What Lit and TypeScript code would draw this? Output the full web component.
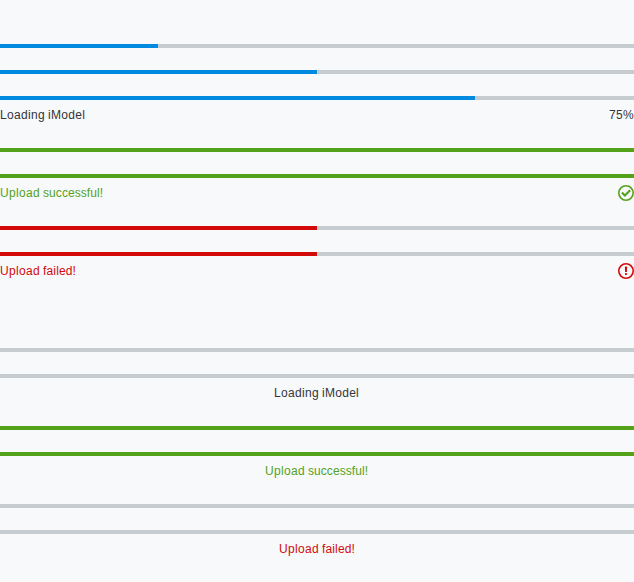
import { LitElement, html, css, svg } from "lit";
import { customElement, property } from "lit/decorators.js";

const tracking: Record<string, string> = {
  "successful!": "tight",
  "failed!": "snug",
  iModel: "medium",
};

@customElement("progress-linear")
class ProgressLinear extends LitElement {
  @property({ type: Number }) value = 0;
  @property() status = "";
  @property() label = "";
  @property() end = "";

  static styles = css`
    :host { display: block; color: #333537; --fill: #008be1; }
    :host([status="positive"]) { --fill: #53a21a; color: #53a21a; }
    :host([status="negative"]) { --fill: #d30a0a; color: #d30a0a; }
    .track { height: 4px; background: #c7ccd1; }
    .fill { height: 4px; background: var(--fill); }
    .row { display: flex; justify-content: space-between; align-items: center; height: 22px; margin-top: 4px; }
    .label { word-spacing: -0.33px; white-space: nowrap; }
    .word { letter-spacing: 0.333px; }
    .medium { letter-spacing: 0.278px; }
    .snug { letter-spacing: 0.14px; }
    .tight { letter-spacing: 0.06px; }
    :host([centered]) .row { justify-content: center; }
    :host([centered]) .label { padding-right: 1px; }
    :host([centered][status="negative"]) .label { padding-right: 0; }
    svg { display: block; width: 16px; height: 16px; fill: currentColor; }
  `;

  icon() {
    return html`<svg viewBox="0 0 16 16">
      <path d="M8 1.6A6.4 6.4 0 1 1 1.6 8 6.4 6.4 0 0 1 8 1.6M8 0a8 8 0 1 0 8 8 8 8 0 0 0-8-8z"/>
      ${this.status === "positive"
        ? svg`<path d="M11.4 4.4 6.9 8.9 4.7 6.7 3.2 8.2l3.7 3.7 6-6z"/>`
        : svg`<path d="M6.9 4.2Q6.9 3.6 7.5 3.6h1q.6 0 .6.6L8.9 9H7.1z"/><circle cx="8" cy="11.1" r="1.15"/>`}
    </svg>`;
  }

  text(value: string) {
    return html`<span class="label">${value.split(" ").map(
      (word, i) => html`${i ? " " : ""}<span class="word ${tracking[word] ?? ""}">${word}</span>`
    )}</span>`;
  }

  render() {
    return html`
      <div class="track"><div class="fill" style="width:${Math.max(0, this.value - (this.value < 100 ? 0.03 : 0))}%"></div></div>
      ${this.label ? html`<div class="row">
        ${this.text(this.label)}
        ${this.end === "icon" ? this.icon() : this.end ? this.text(this.end) : ""}
      </div>` : ""}`;
  }
}

@customElement("app-root")
class AppRoot extends LitElement {
  static styles = css`
    :host {
      display: block; box-sizing: border-box; height: 582px; padding-top: 44px;
      background: #f8f9fb; font: 12px/22px "Liberation Sans", Arial, sans-serif;
    }
    .group { display: grid; }
    .group + .group { margin-top: 66px; }
    progress-linear { margin-bottom: 22px; }
    .group > :last-child { margin-bottom: 0; }
  `;

  render() {
    return html`
      <div class="group">
        <progress-linear value="25"></progress-linear>
        <progress-linear value="50"></progress-linear>
        <progress-linear value="75" label="Loading iModel" end="75%"></progress-linear>
        <progress-linear value="100" status="positive"></progress-linear>
        <progress-linear value="100" status="positive" label="Upload successful!" end="icon"></progress-linear>
        <progress-linear value="50" status="negative"></progress-linear>
        <progress-linear value="50" status="negative" label="Upload failed!" end="icon"></progress-linear>
      </div>
      <div class="group">
        <progress-linear centered></progress-linear>
        <progress-linear centered label="Loading iModel"></progress-linear>
        <progress-linear centered value="100" status="positive"></progress-linear>
        <progress-linear centered value="100" status="positive" label="Upload successful!"></progress-linear>
        <progress-linear centered status="negative"></progress-linear>
        <progress-linear centered status="negative" label="Upload failed!"></progress-linear>
      </div>`;
  }
}
